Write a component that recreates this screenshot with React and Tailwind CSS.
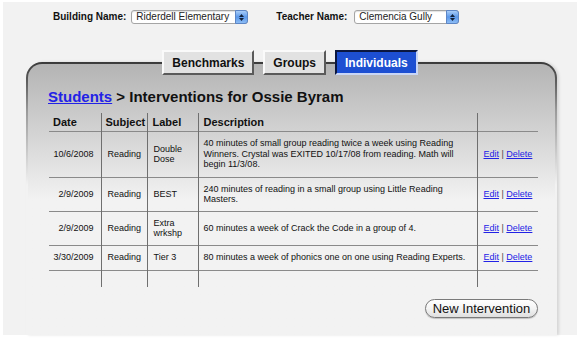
import React from 'react';

const rows = [
  {
    date: '10/6/2008',
    subject: 'Reading',
    label: ['Double', 'Dose'],
    desc: [
      '40 minutes of small group reading twice a week using Reading',
      'Winners. Crystal was EXITED 10/17/08 from reading. Math will',
      'begin 11/3/08.',
    ],
    h: 'h-[46px]',
  },
  {
    date: '2/9/2009',
    subject: 'Reading',
    label: ['BEST'],
    desc: ['240 minutes of reading in a small group using Little Reading', 'Masters.'],
    h: 'h-[34px]',
  },
  {
    date: '2/9/2009',
    subject: 'Reading',
    label: ['Extra', 'wrkshp'],
    desc: ['60 minutes a week of Crack the Code in a group of 4.'],
    h: 'h-[34px]',
  },
  {
    date: '3/30/2009',
    subject: 'Reading',
    label: ['Tier 3'],
    desc: ['80 minutes a week of phonics one on one using Reading Experts.'],
    h: 'h-[25px]',
  },
];

function Lines({ items }) {
  return items.map((t, i) => (
    <React.Fragment key={i}>
      {i > 0 && <br />}
      {t}
    </React.Fragment>
  ));
}

function FakeSelect({ value, width }) {
  return (
    <div className={`flex items-center h-[14px] ${width} rounded-[3px] border border-[#a5a5a5] bg-white shadow-[inset_0_1px_1px_rgba(0,0,0,0.12)]`}>
      <span className="flex-1 pl-[4px] text-[10px] leading-none text-[#222] whitespace-nowrap overflow-hidden">{value}</span>
      <span className="h-[14px] w-[13px] -my-px -mr-px rounded-r-[3px] border border-[#5d86c6] bg-gradient-to-b from-[#a9cdf7] via-[#5b98ea] to-[#8cbcf4] flex flex-col items-center justify-center gap-[1px]">
        <svg width="5" height="3" viewBox="0 0 5 3"><path d="M2.5 0 L5 3 L0 3 Z" fill="#10203a" /></svg>
        <svg width="5" height="3" viewBox="0 0 5 3"><path d="M0 0 L5 0 L2.5 3 Z" fill="#10203a" /></svg>
      </span>
    </div>
  );
}

function Tab({ children, active }) {
  const look = active
    ? 'bg-[#1d4fd2] text-white border-t-[#0b1740] border-l-[#0b1740] border-r-[#c9d6f6] border-b-[#c9d6f6]'
    : 'bg-[#e2e2e2] text-[#111] border-t-[#fafafa] border-l-[#fafafa] border-r-[#5a5a5a] border-b-[#5a5a5a]';
  return (
    <div className={`h-[25px] px-[8px] border-2 flex items-center text-[12px] font-bold ${look}`}>
      {children}
    </div>
  );
}

export default function App() {
  return (
    <div className="w-[580px] h-[338px] bg-white pl-[3px] pt-[2px] pr-[3px] pb-[3px] font-['Liberation_Sans',Arial,sans-serif]">
      <div className="h-full bg-[#f2f2f2] flex flex-col">
        <div className="flex items-center h-[14px] mt-[8px] pl-[50px]">
          <span className="text-[10px] leading-[14px] font-bold text-[#111] mr-[5px]">Building Name:</span>
          <FakeSelect value="Riderdell Elementary" width="w-[117px]" />
          <span className="text-[10px] leading-[14px] font-bold text-[#111] ml-[28px] mr-[7px]">Teacher Name:</span>
          <FakeSelect value="Clemencia Gully" width="w-[105px]" />
        </div>

        <div className="relative z-10 mt-[26px] flex justify-center gap-[9px]">
          <Tab>Benchmarks</Tab>
          <Tab>Groups</Tab>
          <Tab active>Individuals</Tab>
        </div>

        <div className="-mt-[13px] ml-[23px] mr-[20px] flex-1 rounded-t-[16px] bg-gradient-to-b from-[#3a3a3a] via-[#9a9a9a] via-[18%] to-[#f2f2f2] to-[45%] pt-[2px] px-[2px] shadow-[2px_0_3px_rgba(0,0,0,0.12)]">
          <div className="h-full rounded-t-[14px] bg-gradient-to-b from-[#b4b4b4] to-[#f2f2f2] to-[50%] pl-[20px] pt-[24px]">
            <h1 className="text-[15px] leading-[18px] font-bold text-[#111]">
              <a href="#" className="text-[#2222e6] underline">Students</a> &gt; Interventions for Ossie Byram
            </h1>

            <div className="ml-[1px] mt-[7px] w-[489px]">
              <table className="w-[489px] border-collapse table-fixed text-[#111]">
                <colgroup>
                  <col className="w-[52px]" />
                  <col className="w-[46px]" />
                  <col className="w-[51px]" />
                  <col className="w-[279px]" />
                  <col className="w-[61px]" />
                </colgroup>
                <thead>
                  <tr className="h-[18px] border-b border-[#8a8a8a] text-[11px] leading-[13px] font-bold text-left">
                    <th className="pl-[4px] pt-[1px]">Date</th>
                    <th className="pl-[4px] pt-[1px] border-l border-[#6f6f6f]">Subject</th>
                    <th className="pl-[5px] pt-[1px] border-l border-[#6f6f6f]">Label</th>
                    <th className="pl-[5px] pt-[1px] border-l border-[#6f6f6f]">Description</th>
                    <th className="border-l border-[#6f6f6f]"></th>
                  </tr>
                </thead>
                <tbody className="text-[9px] leading-[10.5px]">
                  {rows.map((r, i) => (
                    <tr key={i} className={`${r.h} border-b border-[#8a8a8a]`}>
                      <td className="text-right pr-[7px] align-middle">{r.date}</td>
                      <td className="pl-[6px] border-l border-[#6f6f6f] align-middle">{r.subject}</td>
                      <td className="pl-[6px] border-l border-[#6f6f6f] align-middle"><Lines items={r.label} /></td>
                      <td className="pl-[5px] border-l border-[#6f6f6f] align-middle whitespace-nowrap"><Lines items={r.desc} /></td>
                      <td className="pl-[6px] border-l border-[#6f6f6f] align-middle whitespace-nowrap">
                        <a href="#" className="text-[#2222e6] underline">Edit</a>
                        <span className="text-[#444]"> | </span>
                        <a href="#" className="text-[#2222e6] underline">Delete</a>
                      </td>
                    </tr>
                  ))}
                  <tr className="h-[17px]">
                    <td></td>
                    <td className="border-l border-[#6f6f6f]"></td>
                    <td className="border-l border-[#6f6f6f]"></td>
                    <td className="border-l border-[#6f6f6f]"></td>
                    <td className="border-l border-[#6f6f6f]"></td>
                  </tr>
                </tbody>
              </table>

              <div className="mt-[12px] flex justify-end">
                <button className="h-[19px] w-[113px] rounded-full border border-[#7a7a7a] bg-gradient-to-b from-white via-[#f4f4f4] to-[#dedede] text-[13px] leading-none text-[#111] shadow-[0_1px_1px_rgba(0,0,0,0.2)]">
                  New Intervention
                </button>
              </div>
            </div>
          </div>
        </div>
      </div>
    </div>
  );
}
